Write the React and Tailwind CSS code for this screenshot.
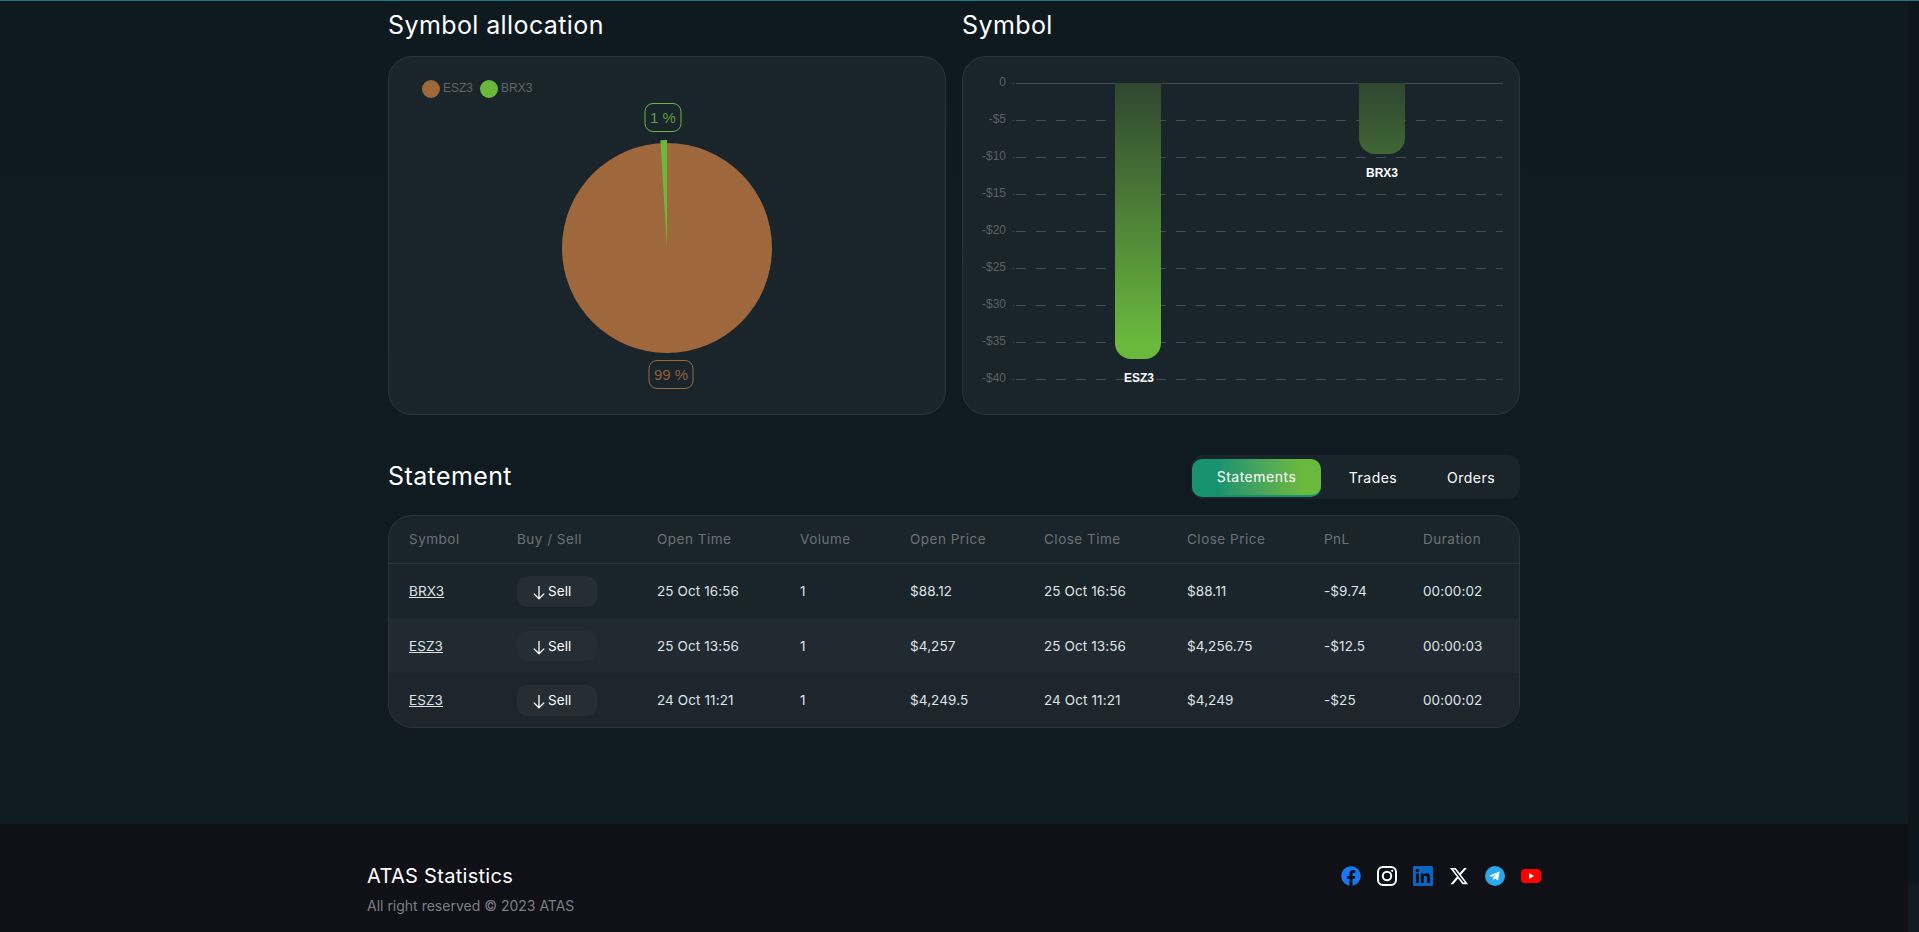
import React from "react";
import { FaFacebook } from "react-icons/fa";
import { FaXTwitter } from "react-icons/fa6";
import { SiLinkedin } from "react-icons/si";

const rows = [
  { symbol: "BRX3", openTime: "25 Oct 16:56", volume: 1, openPrice: "$88.12", closeTime: "25 Oct 16:56", closePrice: "$88.11", pnl: "-$9.74", duration: "00:00:02", rowClass: "h-[56px] bg-[#1a242b]", pill: "h-[31px]" },
  { symbol: "ESZ3", openTime: "25 Oct 13:56", volume: 1, openPrice: "$4,257", closeTime: "25 Oct 13:56", closePrice: "$4,256.75", pnl: "-$12.5", duration: "00:00:03", rowClass: "h-[54px] bg-[#222a31]", pill: "h-[30px]" },
  { symbol: "ESZ3", openTime: "24 Oct 11:21", volume: 1, openPrice: "$4,249.5", closeTime: "24 Oct 11:21", closePrice: "$4,249", pnl: "-$25", duration: "00:00:02", rowClass: "h-[54px] bg-[#1e262d]", pill: "h-[31px]" },
];

const ticks = ["0", "-$5", "-$10", "-$15", "-$20", "-$25", "-$30", "-$35", "-$40"];

const PieChart = () => (
  <svg width="556" height="357" viewBox="0 0 556 357" className="block">
    <circle cx="42" cy="32" r="9" fill="#9f673c" />
    <text x="54" y="35" fontSize="12" fill="#5f6569" fontFamily="Liberation Sans">ESZ3</text>
    <circle cx="100" cy="32" r="9" fill="#6ab93c" />
    <text x="112" y="35" fontSize="12" fill="#5f6569" fontFamily="Liberation Sans">BRX3</text>

    <circle cx="278" cy="191" r="105" fill="#9f673c" />
    <path d="M278 191 L278 83 L271.4 83.2 Z" fill="#6ab93c" />

    <rect x="256" y="46.5" width="36" height="28" rx="8" fill="none" stroke="#6ab93c" />
    <text x="274" y="66" fontSize="15" textAnchor="middle" fill="#5d9e38" fontFamily="Liberation Sans">1 %</text>
    <rect x="260" y="303.5" width="44" height="28" rx="8" fill="none" stroke="#9f673c" />
    <text x="282" y="323" fontSize="15" textAnchor="middle" fill="#8f5f3a" fontFamily="Liberation Sans">99 %</text>
  </svg>
);

const BarChart = () => (
  <svg width="556" height="357" viewBox="0 0 556 357" className="block">
    <defs>
      <linearGradient id="barFill" gradientUnits="userSpaceOnUse" x1="0" y1="26" x2="0" y2="287">
        <stop offset="0" stopColor="#2f4730" />
        <stop offset="1" stopColor="#6ab93c" />
      </linearGradient>
    </defs>
    {ticks.map((label, i) => {
      const y = 26 + i * 37;
      return (
        <g key={label}>
          <text x="43" y={y + 3} fontSize="12" textAnchor="end" fill="#596066" fontFamily="Liberation Sans">{label}</text>
          <line x1="50" x2="51" y1={y + 0.5} y2={y + 0.5} stroke="#434c52" />
          <line x1="53" x2="540" y1={y + 0.5} y2={y + 0.5} stroke="#434c52" strokeDasharray={i === 0 ? undefined : "10 10"} />
        </g>
      );
    })}
    <path d="M152 26 H198 V286 A16 16 0 0 1 182 302 H168 A16 16 0 0 1 152 286 Z" fill="url(#barFill)" />
    <path d="M396 26 H442 V81 A16 16 0 0 1 426 97 H412 A16 16 0 0 1 396 81 Z" fill="url(#barFill)" />
    <text x="176" y="325" fontSize="12" fontWeight="700" textAnchor="middle" fill="#ffffff" fontFamily="Liberation Sans">ESZ3</text>
    <text x="419" y="120" fontSize="12" fontWeight="700" textAnchor="middle" fill="#ffffff" fontFamily="Liberation Sans">BRX3</text>
  </svg>
);

const InstagramIcon = () => (
  <svg width="20" height="20" viewBox="0 0 20 20" fill="none" stroke="#ffffff" strokeWidth="2">
    <rect x="1" y="1" width="18" height="18" rx="5" />
    <circle cx="10" cy="10" r="4.2" />
    <circle cx="15.2" cy="4.8" r="1.1" fill="#ffffff" stroke="none" />
  </svg>
);

const TelegramIcon = () => (
  <svg width="20" height="20" viewBox="0 0 20 20">
    <circle cx="10" cy="10" r="10" fill="#29a9eb" />
    <path d="M4.2 9.8 14.6 5.6 13 14.6 9.9 12.4 8.3 13.9 8 11.2 12.6 7.4 6.9 10.7Z" fill="#ffffff" />
  </svg>
);

const YoutubeIcon = () => (
  <svg width="20" height="20" viewBox="0 0 20 20">
    <rect x="0" y="3" width="20" height="14" rx="4" fill="#ff0000" />
    <path d="M8 7 13 10 8 13Z" fill="#ffffff" />
  </svg>
);

const SellArrow = () => (
  <svg width="12" height="15" viewBox="0 0 12 15" fill="none" stroke="#ffffff" strokeWidth="1.3" className="mt-0.5">
    <path d="M6 1V13.5M.8 8.6 6 13.8 11.2 8.6" />
  </svg>
);

const App = () => {
  return (
    <div className="flex h-[932px] overflow-hidden border-t border-[#177a85] bg-[#0f1a20] font-['Inter',sans-serif] text-white">
      <div className="flex min-w-0 flex-1 flex-col">
        <main className="h-[823px] shrink-0 bg-gradient-to-b from-[#0e1920] to-[#101c22]">
          <div className="mx-auto w-[1132px]">
            <div className="flex gap-4">
              <section className="w-[558px]">
                <h2 className="h-[55px] pt-2 text-[25px] leading-8 tracking-[0.4px]">Symbol allocation</h2>
                <div className="h-[359px] rounded-3xl border border-[#2a343b] bg-[#1a242b]">
                  <PieChart />
                </div>
              </section>
              <section className="w-[558px]">
                <h2 className="h-[55px] pt-2 text-[25px] leading-8 tracking-[0.4px]">Symbol</h2>
                <div className="h-[359px] rounded-3xl border border-[#2a343b] bg-[#1a242b]">
                  <BarChart />
                </div>
              </section>
            </div>

            <div className="mt-10 flex h-[44px] items-center justify-between">
              <h2 className="mb-0.5 text-[25px] leading-8 tracking-[0.4px]">Statement</h2>
              <div className="flex h-[44px] w-[329px] rounded-xl bg-[#1a242b] pl-px pt-1 text-sm tracking-[0.5px]">
                <button className="h-[38px] w-[129px] rounded-[10px] border-b-2 border-[#16926f] bg-gradient-to-r from-[#16926f] from-20% to-[#6ab93c] to-85%">Statements</button>
                <button className="ml-[3px] h-[38px] w-[98px]">Trades</button>
                <button className="h-[38px] w-[98px]">Orders</button>
              </div>
            </div>

            <div className="mt-4 overflow-hidden rounded-3xl border border-[#2a343b] bg-[#1a242b]">
              <table className="w-full table-fixed border-collapse text-left text-[13.5px] tracking-[0.1px]">
                <colgroup>
                  <col className="w-[128px]" />
                  <col className="w-[140px]" />
                  <col className="w-[143px]" />
                  <col className="w-[110px]" />
                  <col className="w-[134px]" />
                  <col className="w-[143px]" />
                  <col className="w-[137px]" />
                  <col className="w-[99px]" />
                  <col />
                </colgroup>
                <thead>
                  <tr className="h-[47px] border-b border-[#2a343b] tracking-[0.5px] text-[#6b7277]">
                    <th className="pl-5 font-normal">Symbol</th>
                    <th className="font-normal">Buy / Sell</th>
                    <th className="font-normal">Open Time</th>
                    <th className="font-normal">Volume</th>
                    <th className="font-normal">Open Price</th>
                    <th className="font-normal">Close Time</th>
                    <th className="font-normal">Close Price</th>
                    <th className="font-normal">PnL</th>
                    <th className="font-normal">Duration</th>
                  </tr>
                </thead>
                <tbody className="text-[#dfe3e6]">
                  {rows.map((row) => (
                    <tr key={row.openTime} className={row.rowClass}>
                      <td className="pl-5 underline">{row.symbol}</td>
                      <td>
                        <span className={`flex w-20 items-center rounded-[10px] bg-[#262e35] pl-4 text-white ${row.pill}`}>
                          <SellArrow />
                          <span className="ml-[3px]">Sell</span>
                        </span>
                      </td>
                      <td>{row.openTime}</td>
                      <td>{row.volume}</td>
                      <td>{row.openPrice}</td>
                      <td>{row.closeTime}</td>
                      <td>{row.closePrice}</td>
                      <td>{row.pnl}</td>
                      <td>{row.duration}</td>
                    </tr>
                  ))}
                </tbody>
              </table>
            </div>
          </div>
        </main>

        <footer className="flex-1 bg-[#101116]">
          <div className="mx-auto flex w-[1174px] justify-between pt-[37px]">
            <div>
              <div className="text-xl leading-[30px] tracking-[0.3px]">ATAS Statistics</div>
              <div className="mt-1 text-sm leading-[22px] text-[#7d7e82]">All right reserved © 2023 ATAS</div>
            </div>
            <div className="box-content flex h-5 gap-4 pt-[5px]">
              <FaFacebook size={20} color="#1877f2" />
              <InstagramIcon />
              <SiLinkedin size={20} color="#0a66c2" />
              <FaXTwitter size={20} color="#ffffff" />
              <TelegramIcon />
              <YoutubeIcon />
            </div>
          </div>
        </footer>
      </div>

      {/* page scrollbar */}
      <div className="w-[11px] shrink-0 bg-[#0f1b21]">
        <div className="h-[884px] rounded-b-md bg-[#0c161c]" />
      </div>
    </div>
  );
};

export default App;
